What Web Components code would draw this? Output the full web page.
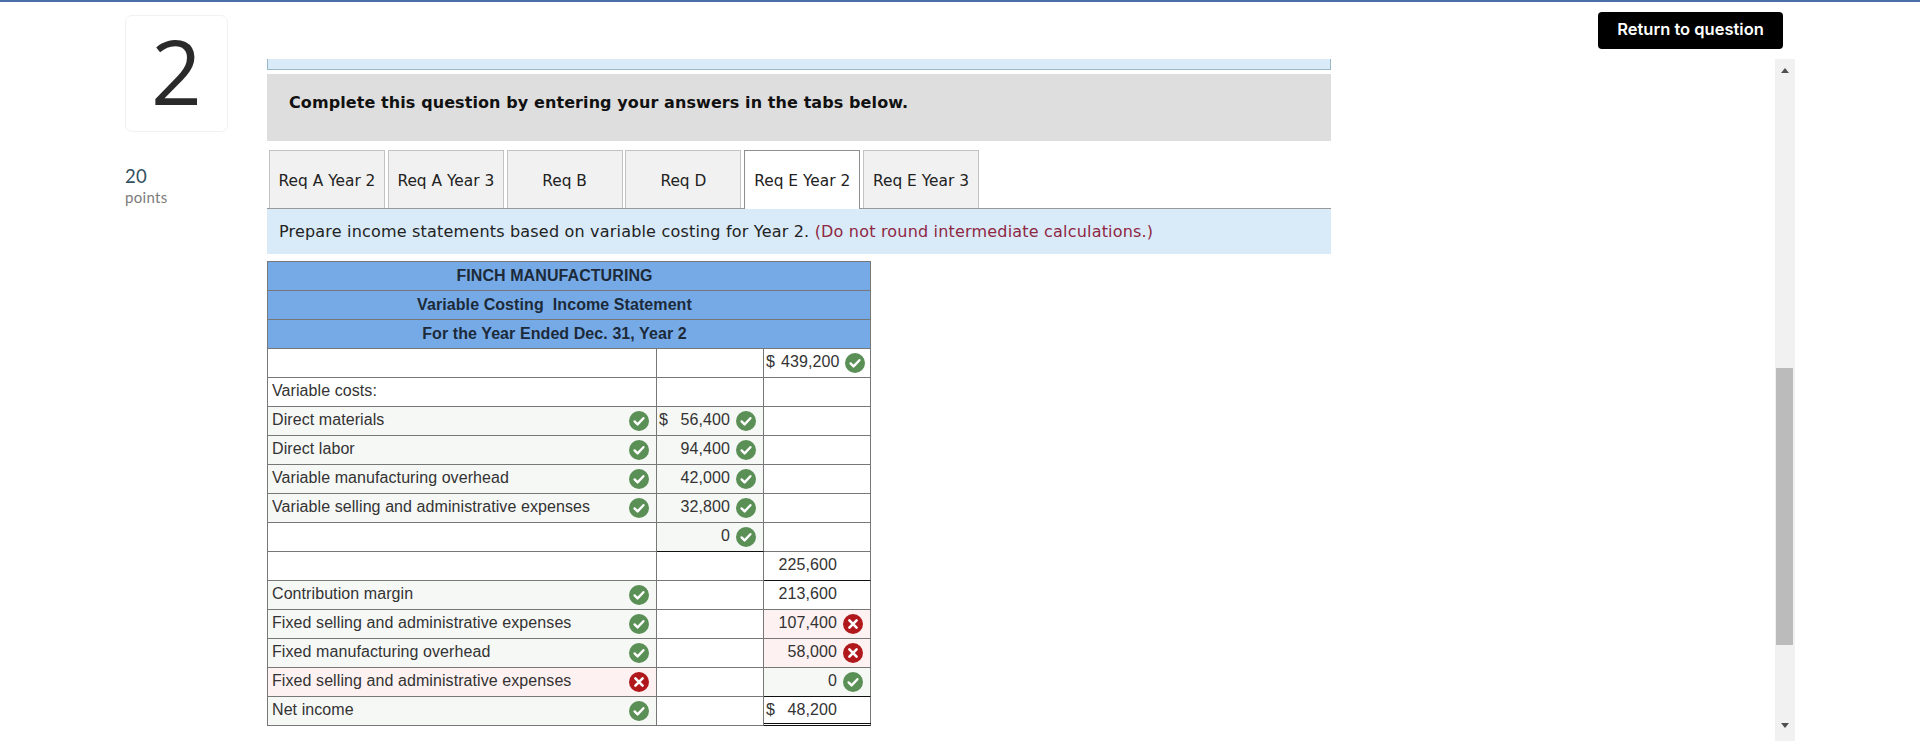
<!DOCTYPE html>
<html><head><meta charset="utf-8"><title>Question 2</title>
<style>html,body{margin:0;padding:0;background:#fff}body{font-family:"DejaVu Sans",sans-serif;overflow:hidden}</style></head>
<body>
<q-page>
  <q-side slot="side" num="2" points="20"></q-side>
  <q-prompt>Complete this question by entering your answers in the tabs below.</q-prompt>
  <q-tabs>
    <q-tab>Req A Year 2</q-tab><q-tab>Req A Year 3</q-tab><q-tab>Req B</q-tab><q-tab>Req D</q-tab><q-tab active>Req E Year 2</q-tab><q-tab>Req E Year 3</q-tab>
  </q-tabs>
  <q-note>Prepare income statements based on variable costing for Year 2. <span style="color:#8f2743">(Do not round intermediate calculations.)</span></q-note>
  <st-table>
    <st-title>FINCH MANUFACTURING</st-title>
    <st-title>Variable Costing&nbsp; Income Statement</st-title>
    <st-title>For the Year Ended Dec. 31, Year 2</st-title>

    <st-cell label></st-cell><st-cell></st-cell><st-cell mark="ok" plain cur="$">439,200</st-cell>
    <st-cell label>Variable costs:</st-cell><st-cell></st-cell><st-cell></st-cell>
    <st-cell label mark="ok">Direct materials</st-cell><st-cell mark="ok" cur="$">56,400</st-cell><st-cell></st-cell>
    <st-cell label mark="ok">Direct labor</st-cell><st-cell mark="ok">94,400</st-cell><st-cell></st-cell>
    <st-cell label mark="ok">Variable manufacturing overhead</st-cell><st-cell mark="ok">42,000</st-cell><st-cell></st-cell>
    <st-cell label mark="ok">Variable selling and administrative expenses</st-cell><st-cell mark="ok">32,800</st-cell><st-cell></st-cell>
    <st-cell label></st-cell><st-cell mark="ok" rule="single">0</st-cell><st-cell></st-cell>
    <st-cell label></st-cell><st-cell></st-cell><st-cell gutter rule="single">225,600</st-cell>
    <st-cell label mark="ok">Contribution margin</st-cell><st-cell></st-cell><st-cell gutter>213,600</st-cell>
    <st-cell label mark="ok">Fixed selling and administrative expenses</st-cell><st-cell></st-cell><st-cell mark="bad">107,400</st-cell>
    <st-cell label mark="ok">Fixed manufacturing overhead</st-cell><st-cell></st-cell><st-cell mark="bad">58,000</st-cell>
    <st-cell label mark="bad">Fixed selling and administrative expenses</st-cell><st-cell></st-cell><st-cell mark="ok" rule="single">0</st-cell>
    <st-cell label mark="ok">Net income</st-cell><st-cell></st-cell><st-cell gutter cur="$" rule="double">48,200</st-cell>
  </st-table>
  <q-return slot="aside">Return to question</q-return>
  <q-scroll slot="aside"></q-scroll>
</q-page>
<script>
function def(name, css, html, extra){
  customElements.define(name, class extends HTMLElement{
    constructor(){super();const r=this.attachShadow({mode:"open"});r.innerHTML="<style>"+css+"</style>"+html;}
    connectedCallback(){ if(extra) extra.call(this,this.shadowRoot); }
  });
}
def("q-page",
 `:host{display:block}
  .top{height:2px;background:#4a6fa8}
  .wrap{display:flex;align-items:flex-start;padding-left:125px;height:739px;overflow:hidden}
  .main{width:1064px;margin-left:39px;padding-top:57px;flex:none}
  .aside{margin-left:267px;width:197px;flex:none;display:flex;flex-direction:column;align-items:flex-end;padding-top:10px}`,
 `<div class="top"></div><div class="wrap"><slot name="side"></slot><div class="main"><slot></slot></div><div class="aside"><slot name="aside"></slot></div></div>`);
def("q-side",
 `:host{display:block;width:103px;flex:none;padding-top:13px;color:#33505f}
  .card{box-sizing:border-box;height:117px;border:1px solid #f1f1f1;border-radius:7px;display:flex;align-items:center;justify-content:center;padding-bottom:6px;font:400 89px/1 "Open Sans",sans-serif;color:#2a2a2a}
  .pts{margin-top:33px;font:400 18.5px/22px Lato,sans-serif;letter-spacing:.2px}
  .lbl{font:400 15px/20px Lato,sans-serif;color:#7b7b7b;letter-spacing:.3px}`,
 `<div class="card" id="n"></div><div class="pts" id="p"></div><div class="lbl">points</div>`,
 function(r){r.getElementById("n").textContent=this.getAttribute("num");r.getElementById("p").textContent=this.getAttribute("points");});
def("q-prompt",
 `:host{display:block}
  .strip{height:10px;background:#d9ebf9;border:solid #9ab8c6;border-width:0 1px 1px 1px}
  .band{margin-top:4px;height:67px;background:#dedede;display:flex;align-items:center;padding-left:22px;padding-bottom:11px;box-sizing:border-box;font:700 16px "DejaVu Sans",Verdana,sans-serif;letter-spacing:.09px;color:#111}`,
 `<div class="strip"></div><div class="band"><slot></slot></div>`);
def("q-tabs",
 `:host{display:flex;gap:2.8px;margin-top:9px;padding-left:2px;height:58px;border-bottom:1px solid #999}`,
 `<slot></slot>`);
def("q-tab",
 `:host{display:flex;box-sizing:border-box;width:116px;height:58px;padding-top:3px;align-items:center;justify-content:center;background:#f1f1f1;border:1px solid #c2c2c2;border-bottom:0;font:15.4px "DejaVu Sans",Verdana,sans-serif;color:#222;white-space:nowrap}
  :host([active]){background:#fff;border-color:#8f8f8f;height:59px;padding-bottom:1px;position:relative}`,
 `<slot></slot>`);
def("q-note",
 `:host{display:flex;align-items:center;box-sizing:border-box;height:45px;background:#d9ebf9;padding-left:12px;font:16px "DejaVu Sans",Verdana,sans-serif;letter-spacing:.19px;color:#222;white-space:pre-wrap}`,
 `<div><slot></slot></div>`);
def("st-table",
 `:host{display:block;margin-top:7px;width:604px}
  .g{display:grid;grid-template-columns:389px 107px 107px;border-left:1px solid #777;border-top:1px solid #777;width:604px;box-sizing:border-box}`,
 `<div class="g"><slot></slot></div>`);
def("st-title",
 `:host{grid-column:1 / -1;display:flex;box-sizing:border-box;height:29px;align-items:center;justify-content:center;padding-right:29px;padding-bottom:1px;background:#76aae7;border-right:1px solid #777;border-bottom:1px solid #777;font:700 16px "Liberation Sans",Arial,sans-serif;letter-spacing:.08px;color:#1c2a3a}`,
 `<slot></slot>`);
const OK=`<svg width="20" height="20" viewBox="0 0 20 20"><circle cx="10" cy="10" r="10" fill="#5a8f56"/><path d="M5.6 10.4l3 3 5.8-6.2" fill="none" stroke="#fff" stroke-width="2.4" stroke-linecap="round" stroke-linejoin="round"/></svg>`;
const BAD=`<svg width="20" height="20" viewBox="0 0 20 20"><circle cx="10" cy="10" r="10" fill="#b0181c"/><path d="M6.4 6.4l7.2 7.2M13.6 6.4l-7.2 7.2" fill="none" stroke="#fff" stroke-width="2.6" stroke-linecap="round"/></svg>`;
def("st-cell",
 `:host{display:flex;position:relative;box-sizing:border-box;height:29px;align-items:center;border-right:1px solid #777;border-bottom:1px solid #777;padding:0 7px 0 2px;font:16px/20px "Liberation Sans",Arial,sans-serif;letter-spacing:.08px;color:#333;white-space:nowrap;gap:6px}
  :host([label]){padding-left:4px}
  :host([mark="ok"]){background:#f6f8f6}
  :host([mark="bad"]){background:#fdf1f1}
  :host([plain]){background:#fff}
  :host([rule="single"]),:host([rule="double"]){border-bottom-color:#111}
  .cur{flex:none;margin-top:-2px}
  .cur:empty{display:none}
  .txt{margin-left:auto;margin-top:-2px}
  :host([label]) .txt{margin-left:0;margin-right:auto}
  .ic{width:20px;height:20px;flex:none;display:none}
  :host([mark]) .ic,:host([gutter]) .ic{display:block}
  .dbl{display:none;position:absolute;left:0;right:-1px;bottom:1px;height:1px;background:#111}
  :host([rule="double"]) .dbl{display:block}`,
 `<span class="cur" id="c"></span><span class="txt"><slot></slot></span><span class="ic" id="i"></span><span class="dbl"></span>`,
 function(r){
   const m=this.getAttribute("mark");
   if(m) r.getElementById("i").innerHTML=m==="ok"?OK:BAD;
   r.getElementById("c").textContent=this.getAttribute("cur")||"";
 });
def("q-return",
 `:host{display:flex;box-sizing:border-box;width:185px;height:37px;margin-right:12px;padding-bottom:3px;align-items:center;justify-content:center;background:#000;color:#fff;border-radius:4px;font:600 16.5px Inter,sans-serif;white-space:nowrap}`,
 `<slot></slot>`);
def("q-scroll",
 `:host{display:flex;flex-direction:column;align-items:center;box-sizing:border-box;width:20px;height:682px;margin-top:10px;background:#f1f1f1}
  .u{margin-top:9px;width:0;height:0;border:4.5px solid transparent;border-top:0;border-bottom:5px solid #505050}
  .th{margin-top:295px;width:17px;height:277px;background:#bbb;align-self:flex-start;margin-left:1px}
  .d{margin-top:auto;margin-bottom:13px;width:0;height:0;border:4.5px solid transparent;border-bottom:0;border-top:5px solid #505050}`,
 `<div class="u"></div><div class="th"></div><div class="d"></div>`);
</script>
</body></html>
